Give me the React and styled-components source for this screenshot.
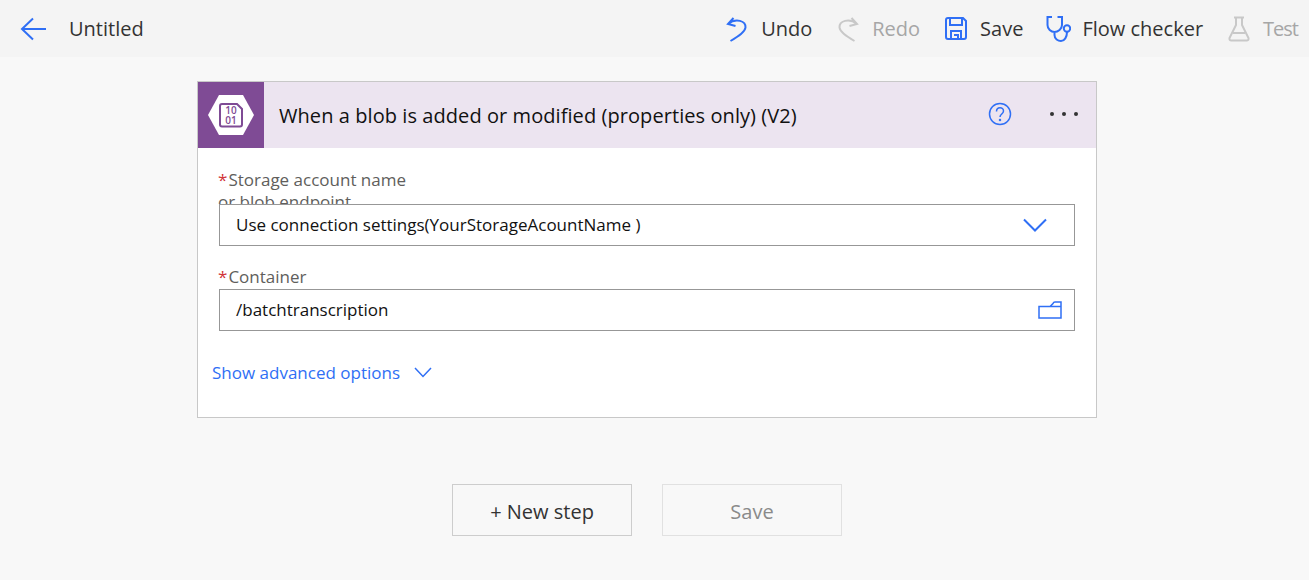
import React from 'react'
import styled, { createGlobalStyle } from 'styled-components'

const blue = '#2f6ff5'
const faded = '#c8c8c8'

const GlobalStyle = createGlobalStyle`
  html, body {
    margin: 0;
    padding: 0;
    background: #f8f8f8;
    font-family: "Open Sans", "Noto Sans", "Liberation Sans", sans-serif;
  }
`

const Page = styled.div`
  width: 1309px;
  height: 580px;
  overflow: hidden;
  display: flex;
  flex-direction: column;
`

const TopBar = styled.header`
  box-sizing: border-box;
  height: 57px;
  background: #f4f4f4;
  display: flex;
  align-items: center;
  padding: 0 11px 0 20px;
`

const BackLink = styled.a`
  display: flex;
  width: 49px;
  color: ${blue};
`

const FlowName = styled.span`
  font-size: 20px;
  color: #333;
`

const Actions = styled.nav`
  margin-left: auto;
  display: flex;
  align-items: center;
  gap: 25px;
`

const Action = styled.a`
  display: flex;
  align-items: center;
  gap: ${p => p.$gap || 13}px;
  margin-left: ${p => p.$lead || 0}px;
  font-size: 20px;
  letter-spacing: ${p => p.$tight || 0}px;
  color: ${p => (p.$disabled ? '#a6a6a6' : '#333')};
  svg {
    color: ${p => (p.$disabled ? faded : blue)};
  }
`

const Main = styled.main`
  padding-left: 197px;
`

const Card = styled.section`
  width: 900px;
  box-sizing: border-box;
  height: 337px;
  margin-top: 24px;
  background: #fff;
  border: 1px solid #c8c8c8;
`

const CardHeader = styled.div`
  height: 66px;
  background: #ece4f0;
  display: flex;
  align-items: center;
`

const IconTile = styled.div`
  width: 66px;
  height: 66px;
  background: #7f4b95;
  display: flex;
  align-items: center;
  justify-content: center;
`

const CardTitle = styled.h2`
  margin: 1px 0 0 15px;
  font-size: 20px;
  font-weight: 400;
  letter-spacing: 0.07px;
  color: #111;
`

const HeaderTools = styled.div`
  margin: 0 0 2px auto;
  display: flex;
  align-items: center;
  gap: 38px;
  padding-right: 18px;
  color: ${blue};
`

const CardBody = styled.div`
  padding: 21px 21px 0 21px;
`

const Field = styled.div`
  margin-bottom: ${p => p.$mb || 0}px;
`

const Label = styled.label`
  display: block;
  width: 200px;
  height: ${p => p.$h}px;
  margin-left: -1px;
  overflow: hidden;
  font-size: 17px;
  line-height: 22px;
  color: #605e5c;
`

const Star = styled.span`
  color: #d13438;
  margin-right: 1px;
`

const InputBox = styled.div`
  height: 42px;
  box-sizing: border-box;
  border: 1px solid #979797;
  display: flex;
  align-items: center;
  justify-content: space-between;
  padding: 0 ${p => p.$pr}px 2px 16px;
  font-size: 17px;
  color: #111;
  background: #fff;
  svg {
    color: ${blue};
    margin-top: 2px;
  }
`

const AdvancedLink = styled.a`
  display: flex;
  align-items: center;
  gap: 14px;
  margin: 30px 0 0 -7px;
  font-size: 17px;
  color: ${blue};
`

const Footer = styled.div`
  display: flex;
  gap: 30px;
  margin: 66px 0 0 255px;
`

const StepButton = styled.button`
  width: 180px;
  height: 52px;
  box-sizing: border-box;
  padding: 2px 0 0;
  background: #f8f8f8;
  border: 1px solid ${p => (p.disabled ? '#e1e1e1' : '#cdcdcd')};
  font: inherit;
  font-size: 20px;
  color: ${p => (p.disabled ? '#8a8a8a' : '#333')};
`

const Icon = ({ w = 24, h = 24, sw = 2, children }) => (
  <svg width={w} height={h} viewBox={`0 0 ${w} ${h}`} fill="none" stroke="currentColor" strokeWidth={sw}>
    {children}
  </svg>
)

const BlobIcon = () => (
  <svg width="46" height="40" viewBox="0 0 46 40">
    <path d="M11 0H35L46 20L35 40H11L0 20Z" fill="#fff" />
    <path d="M14 9H29L34 14V29.500Q34 31.500 32 31.500H14Q12 31.500 12 29.500V11Q12 9 14 9Z" fill="none" stroke="#7f4b95" strokeWidth="2" />
    <text x="23" y="19" textAnchor="middle" fontSize="10" fontWeight="600" fontFamily="Open Sans, sans-serif" fill="#7f4b95">10</text>
    <text x="23" y="29" textAnchor="middle" fontSize="10" fontWeight="600" fontFamily="Open Sans, sans-serif" fill="#7f4b95">01</text>
  </svg>
)

export default function App() {
  return (
    <Page>
      <GlobalStyle />
      <TopBar>
        <BackLink>
          <Icon w={26} h={24}>
            <path d="M26 12H2M13 1.500L2 12L13 22.500" />
          </Icon>
        </BackLink>
        <FlowName>Untitled</FlowName>
        <Actions>
          <Action>
            <Icon w={22} h={26}>
              <path d="M7.500 2L2 8L9.500 10M2 8C10 1.500 20 5 19.500 11.500C19 16 13 20 4.500 25" />
            </Icon>
            Undo
          </Action>
          <Action $disabled>
            <Icon w={22} h={26}>
              <path d="M14.500 2L20 8L12.500 10M20 8C12 1.500 2 5 2.500 11.500C3 16 9 20 17.500 25" />
            </Icon>
            Redo
          </Action>
          <Action>
            <Icon w={22} h={23}>
              <path d="M1 3Q1 1 3 1H18L21 4V20Q21 22 19 22H3Q1 22 1 20ZM5 1V8H17V1M6 22V14H16V22M9 18H13V22" />
            </Icon>
            Save
          </Action>
          <Action $gap={11} $lead={-2}>
            <Icon w={25} h={26}>
              <path d="M6 1H1.500V9C1.500 13 5 16 8.500 16C12 16 16 13 16 9V1H11.500M8.500 16V19C8.500 23 12 25 15 25C18.500 25 21 21 21 16" />
              <circle cx="21" cy="12.500" r="3.200" />
            </Icon>
            Flow checker
          </Action>
          <Action $disabled $tight={-1}>
            <Icon w={22} h={26}>
              <path d="M6 1.500H16M8 1.500V9L1.500 22Q1 24.500 3.500 24.500H18.500Q21 24.500 20.500 22L14 9V1.500M5 17H17" />
            </Icon>
            Test
          </Action>
        </Actions>
      </TopBar>

      <Main>
        <Card>
          <CardHeader>
            <IconTile>
              <BlobIcon />
            </IconTile>
            <CardTitle>When a blob is added or modified (properties only) (V2)</CardTitle>
            <HeaderTools>
              <Icon w={24} h={24} sw={1.500}>
                <circle cx="12" cy="12" r="10.500" />
                <path d="M8.500 9.500C8.500 4.500 15.500 4.500 15.500 9C15.500 12 12 12 12 15" />
                <circle cx="12" cy="18" r="0.500" />
              </Icon>
              <svg width="28" height="4" viewBox="0 0 28 4" fill="#333">
                <circle cx="2" cy="2" r="2" />
                <circle cx="14" cy="2" r="2" />
                <circle cx="26" cy="2" r="2" />
              </svg>
            </HeaderTools>
          </CardHeader>
          <CardBody>
            <Field $mb={20}>
              <Label $h={35}>
                <Star>*</Star>Storage account name or blob endpoint
              </Label>
              <InputBox $pr={27}>
                Use connection settings(YourStorageAcountName )
                <Icon w={24} h={14}>
                  <path d="M1 1.500L12 12.500L23 1.500" />
                </Icon>
              </InputBox>
            </Field>
            <Field>
              <Label $h={23}>
                <Star>*</Star>Container
              </Label>
              <InputBox $pr={12}>
                /batchtranscription
                <Icon w={24} h={18} sw={1.500}>
                  <path d="M1 5.500H12L15 2.500Q15.500 1 17 1H23V17H1ZM12 5.500H23" />
                </Icon>
              </InputBox>
            </Field>
            <AdvancedLink>
              Show advanced options
              <Icon w={18} h={11} sw={1.500}>
                <path d="M1 1L9 9.500L17 1" />
              </Icon>
            </AdvancedLink>
          </CardBody>
        </Card>

        <Footer>
          <StepButton>+ New step</StepButton>
          <StepButton disabled>Save</StepButton>
        </Footer>
      </Main>
    </Page>
  )
}
